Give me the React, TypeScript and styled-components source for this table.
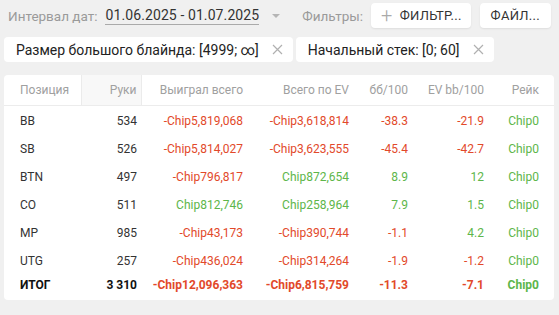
import React from "react";
import styled, { createGlobalStyle } from "styled-components";

const GlobalStyle = createGlobalStyle`
  body {
    margin: 0;
    background: #f0f0f0;
    font-family: Roboto, "Liberation Sans", sans-serif;
  }
`;

type Tone = "neg" | "pos" | "plain";

type Row = {
  pos: string;
  hands: string;
  won: [string, Tone];
  ev: [string, Tone];
  bb: [string, Tone];
  evbb: [string, Tone];
  rake: [string, Tone];
};

const rows: Row[] = [
  { pos: "BB", hands: "534", won: ["-Chip5,819,068", "neg"], ev: ["-Chip3,618,814", "neg"], bb: ["-38.3", "neg"], evbb: ["-21.9", "neg"], rake: ["Chip0", "pos"] },
  { pos: "SB", hands: "526", won: ["-Chip5,814,027", "neg"], ev: ["-Chip3,623,555", "neg"], bb: ["-45.4", "neg"], evbb: ["-42.7", "neg"], rake: ["Chip0", "pos"] },
  { pos: "BTN", hands: "497", won: ["-Chip796,817", "neg"], ev: ["Chip872,654", "pos"], bb: ["8.9", "pos"], evbb: ["12", "pos"], rake: ["Chip0", "pos"] },
  { pos: "CO", hands: "511", won: ["Chip812,746", "pos"], ev: ["Chip258,964", "pos"], bb: ["7.9", "pos"], evbb: ["1.5", "pos"], rake: ["Chip0", "pos"] },
  { pos: "MP", hands: "985", won: ["-Chip43,173", "neg"], ev: ["-Chip390,744", "neg"], bb: ["-1.1", "neg"], evbb: ["4.2", "pos"], rake: ["Chip0", "pos"] },
  { pos: "UTG", hands: "257", won: ["-Chip436,024", "neg"], ev: ["-Chip314,264", "neg"], bb: ["-1.9", "neg"], evbb: ["-1.2", "neg"], rake: ["Chip0", "pos"] },
];

const total: Row = {
  pos: "ИТОГ",
  hands: "3 310",
  won: ["-Chip12,096,363", "neg"],
  ev: ["-Chip6,815,759", "neg"],
  bb: ["-11.3", "neg"],
  evbb: ["-7.1", "neg"],
  rake: ["Chip0", "pos"],
};

const Cross = () => (
  <svg width="11" height="11" viewBox="0 0 11 11">
    <path d="M1 1L10 10M10 1L1 10" stroke="#b0b0b0" strokeWidth="1.2" />
  </svg>
);

const App = () => {
  return (
    <Page>
      <GlobalStyle />
      <TopBar>
        <Group>
          <Muted>Интервал дат:</Muted>
          <DateRange>01.06.2025 - 01.07.2025</DateRange>
          <Caret />
        </Group>
        <Group>
          <Muted>Фильтры:</Muted>
          <Button>
            <Plus>+</Plus>ФИЛЬТР...
          </Button>
          <Button $wide>ФАЙЛ...</Button>
        </Group>
      </TopBar>

      <Chips>
        <Chip>
          Размер большого блайнда: [4999; ∞]
          <Cross />
        </Chip>
        <Chip>
          Начальный стек: [0; 60]
          <Cross />
        </Chip>
      </Chips>

      <Card>
        <Table>
          <colgroup>
            <col style={{ width: 77 }} />
            <col style={{ width: 60 }} />
            <col style={{ width: 106 }} />
            <col style={{ width: 106 }} />
            <col style={{ width: 59 }} />
            <col style={{ width: 76 }} />
            <col style={{ width: 66 }} />
          </colgroup>
          <thead>
            <tr>
              <Th $left $divider>Позиция</Th>
              <Th $divider $sorted>Руки</Th>
              <Th>Выиграл всего</Th>
              <Th>Всего по EV</Th>
              <Th>бб/100</Th>
              <Th>EV bb/100</Th>
              <Th $last>Рейк</Th>
            </tr>
          </thead>
          <tbody>
            {rows.map((r) => (
              <BodyRow key={r.pos}>
                <Td $left>{r.pos}</Td>
                <Td>{r.hands}</Td>
                <Td $tone={r.won[1]}>{r.won[0]}</Td>
                <Td $tone={r.ev[1]}>{r.ev[0]}</Td>
                <Td $tone={r.bb[1]}>{r.bb[0]}</Td>
                <Td $tone={r.evbb[1]}>{r.evbb[0]}</Td>
                <Td $tone={r.rake[1]} $last>{r.rake[0]}</Td>
              </BodyRow>
            ))}
            <TotalRow>
              <Td $left $bold>{total.pos}</Td>
              <Td $bold>{total.hands}</Td>
              <Td $bold $tone={total.won[1]}>{total.won[0]}</Td>
              <Td $bold $tone={total.ev[1]}>{total.ev[0]}</Td>
              <Td $bold $tone={total.bb[1]}>{total.bb[0]}</Td>
              <Td $bold $tone={total.evbb[1]}>{total.evbb[0]}</Td>
              <Td $bold $tone={total.rake[1]} $last>{total.rake[0]}</Td>
            </TotalRow>
          </tbody>
        </Table>
      </Card>
    </Page>
  );
};

const toneColor = (t?: Tone) =>
  t === "neg" ? "#e2492a" : t === "pos" ? "#5db64a" : "#333";

const Page = styled.div`
  width: 559px;
  height: 315px;
  overflow: hidden;
`;

const TopBar = styled.div`
  height: 31px;
  padding: 1px 8px 0 8px;
  box-sizing: border-box;
  display: flex;
  justify-content: space-between;
  align-items: center;
`;

const Group = styled.div`
  display: flex;
  align-items: center;
  gap: 8px;
`;

const Muted = styled.span`
  color: #9a9a9a;
  font-size: 13.5px;
`;

const DateRange = styled.span`
  color: #333;
  font-size: 14px;
  letter-spacing: 0.1px;
  border-bottom: 1px solid #aaa;
  line-height: 17px;
`;

const Caret = styled.span`
  width: 0;
  height: 0;
  margin-left: 5px;
  margin-right: 18px;
  border-left: 4px solid transparent;
  border-right: 4px solid transparent;
  border-top: 4px solid #b5b5b5;
`;

const Button = styled.button<{ $wide?: boolean }>`
  height: 25px;
  margin-top: -2px;
  margin-right: ${(p) => (p.$wide ? "0" : "1px")};
  padding: 0 ${(p) => (p.$wide ? "11px" : "9px")} 0 ${(p) => (p.$wide ? "11px" : "10px")};
  display: flex;
  align-items: center;
  gap: 7px;
  border: none;
  border-radius: 4px;
  background: #fff;
  box-shadow: 0 1px 2px rgba(0, 0, 0, 0.08);
  color: #333;
  font-family: Roboto, "Liberation Sans", sans-serif;
  font-size: 13px;
  letter-spacing: 0.3px;
`;

const Plus = styled.span`
  color: #aaa;
  font-size: 20px;
  font-weight: 300;
  line-height: 1;
`;

const Chips = styled.div`
  display: flex;
  gap: 3px;
  padding: 6px 4px 0;
`;

const Chip = styled.div`
  height: 25px;
  padding: 0 10px 0 12px;
  display: flex;
  align-items: center;
  gap: 13px;
  background: #fff;
  border-radius: 4px;
  color: #222;
  font-size: 14px;
`;

const Card = styled.div`
  margin: 13px 5px 0 4px;
  padding-bottom: 6px;
  background: #fff;
  border-radius: 4px;
`;

const Table = styled.table`
  width: 550px;
  border-collapse: collapse;
  table-layout: fixed;
`;

const Th = styled.th<{ $left?: boolean; $divider?: boolean; $sorted?: boolean; $last?: boolean }>`
  height: 30px;
  padding: 0 ${(p) => (p.$last ? "15px" : "4px")} 0 ${(p) => (p.$left ? "16px" : "4px")};
  text-align: ${(p) => (p.$left ? "left" : "right")};
  font-weight: 400;
  font-size: 12px;
  color: #a0a0a0;
  background: ${(p) => (p.$sorted ? "#f8f8f8" : "transparent")};
  border-right: ${(p) => (p.$divider ? "1px solid #ebebeb" : "none")};
  border-bottom: 1px solid #ececec;
`;

const BodyRow = styled.tr`
  height: 28px;
  vertical-align: middle;
`;

const TotalRow = styled.tr`
  height: 20px;
`;

const Td = styled.td<{ $left?: boolean; $tone?: Tone; $bold?: boolean; $last?: boolean }>`
  padding: 2px ${(p) => (p.$last ? "15px" : "4px")} 0 ${(p) => (p.$left ? "16px" : "4px")};
  text-align: ${(p) => (p.$left ? "left" : "right")};
  font-size: 12px;
  font-weight: ${(p) => (p.$bold ? 700 : 400)};
  color: ${(p) => (p.$bold && !p.$tone ? "#111" : toneColor(p.$tone))};
  white-space: nowrap;
`;

export default App;
